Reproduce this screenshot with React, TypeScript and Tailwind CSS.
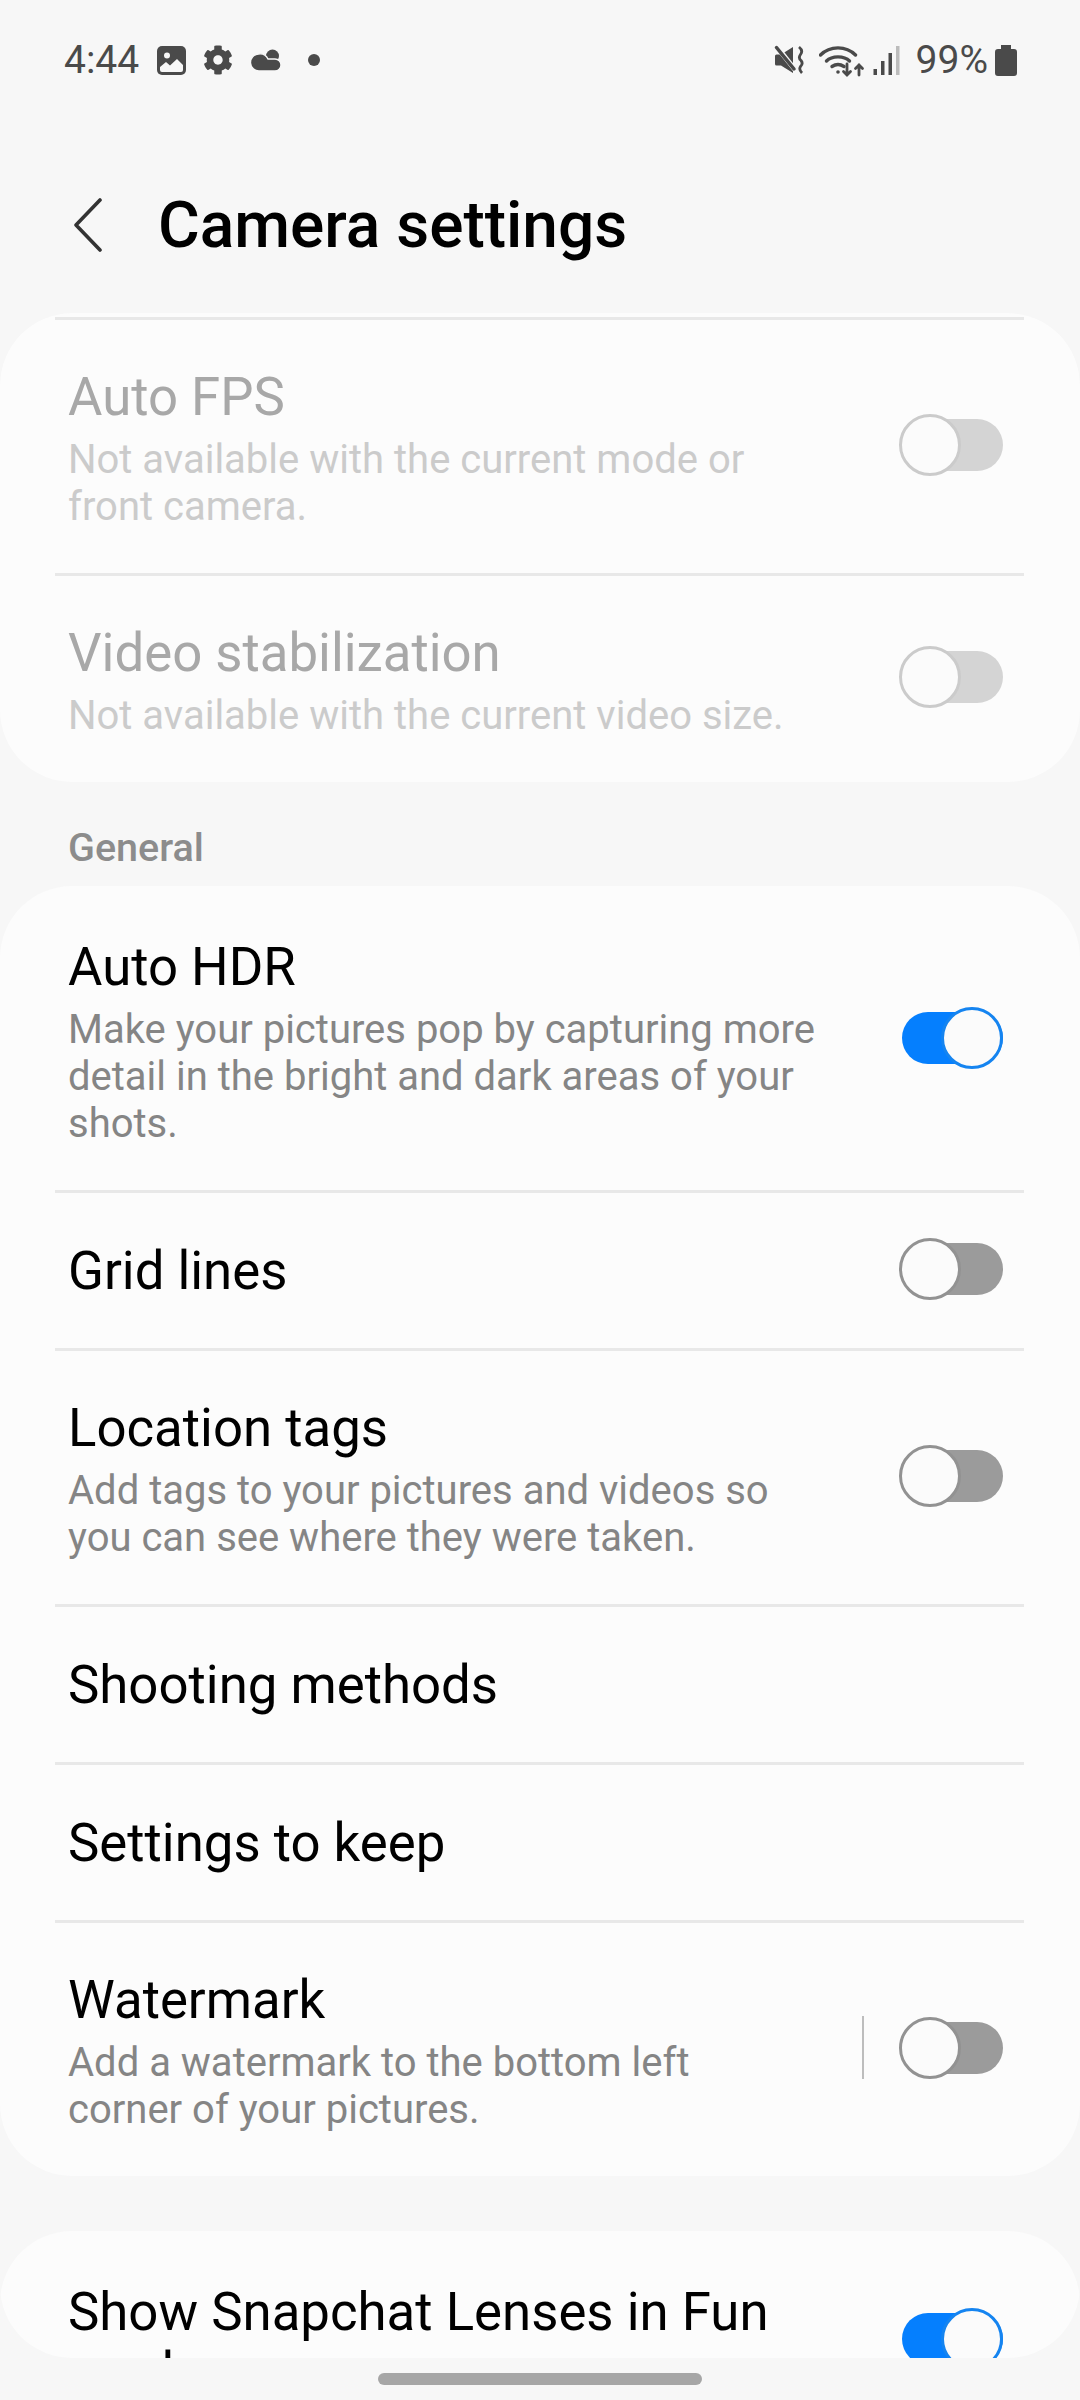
import React from 'react'
import { FaCog } from 'react-icons/fa'

const Toggle = ({ on = false, disabled = false }: { on?: boolean; disabled?: boolean }) => {
  const track = on ? 'bg-[#057ffe]' : disabled ? 'bg-[#d4d4d4]' : 'bg-[#9b9b9b]'
  const ring = on ? 'border-[#1584f0] right-0' : disabled ? 'border-[#cbcbcb] left-0' : 'border-[#929292] left-0'
  return (
    <div className="relative mb-[4px] h-[62px] w-[104px] shrink-0">
      <div className={`absolute top-[5px] right-0 left-[3px] h-[52px] rounded-full ${track}`} />
      <div className={`absolute top-0 size-[62px] rounded-full border-[3px] bg-[#fbfbfb] ${ring}`} />
    </div>
  )
}

type RowProps = {
  title: string
  sub?: string
  toggle?: 'on' | 'off' | 'disabled'
  noBorder?: boolean
  split?: boolean
}

const Row = ({ title, sub, toggle, noBorder, split }: RowProps) => {
  const disabled = toggle === 'disabled'
  return (
    <div className={`flex min-h-[158px] items-center pr-[21px] pl-[13px] ${noBorder ? '' : 'border-t-[3px] border-[#e8e8e8]'}`}>
      <div className={`min-w-0 flex-1 ${sub ? 'pt-[47px] pb-[43px]' : 'pt-[1px]'}`}>
        <div className={`text-[52.75px] leading-[60px] ${disabled ? 'text-[#a8a8a8]' : 'text-black'}`}>{title}</div>
        {sub && (
          <div className={`mt-[9px] text-[40px] leading-[47px] ${split ? 'max-w-[720px]' : 'max-w-[760px]'} ${disabled ? 'text-[#cbcbcb]' : 'text-[#858585]'}`}>
            {sub}
          </div>
        )}
      </div>
      {split && <div className="mr-[35px] mb-[4px] h-[63px] w-[2px] bg-[#bdbdbd]" />}
      {toggle && <Toggle on={toggle === 'on'} disabled={disabled} />}
    </div>
  )
}

const StatusBar = () => (
  <div className="flex h-[120px] items-center justify-between pr-[63px] pl-[64px] text-[#4a4a4a]">
    <div className="flex items-center">
      <span className="text-[39px] leading-none">4:44</span>
      <svg className="ml-[18px]" width="29" height="29" viewBox="0 0 29 29">
        <rect width="29" height="29" rx="5" fill="#4a4a4a" />
        <circle cx="10" cy="9.5" r="3" fill="#f7f7f7" />
        <path d="M3 21 L9 16 L13 19.5 L20 13 L26 19 V24 a2 2 0 0 1 -2 2 H5 a2 2 0 0 1 -2 -2 Z" fill="#f7f7f7" />
      </svg>
      <FaCog className="ml-[17px]" size={30} />
      <svg className="ml-[18px]" width="30" height="22" viewBox="0 0 30 22">
        <circle cx="21.5" cy="7" r="6.5" fill="#4a4a4a" />
        <path d="M8.5 22 a8.5 8.5 0 0 1 -1 -17 a9 9 0 0 1 9.5 5 H24 a6 6 0 0 1 0 12 Z" fill="#4a4a4a" stroke="#f7f7f7" strokeWidth="1.4" />
      </svg>
      <div className="ml-[27px] size-[12px] rounded-full bg-[#4a4a4a]" />
    </div>
    <div className="flex items-center">
      <svg width="30" height="30" viewBox="0 0 30 30" fill="#4a4a4a">
        <path d="M1 11 a1.5 1.5 0 0 1 1.5 -1.5 H7 L19 2 V28 L7 20.5 H2.5 A1.5 1.5 0 0 1 1 19 Z" />
        <path d="M1.5 0 L22 26" stroke="#f7f7f7" strokeWidth="5" />
        <path d="M2.5 2.5 L20 24" stroke="#4a4a4a" strokeWidth="3.5" strokeLinecap="round" />
        <path d="M25 2 Q29.5 5.5 26.5 9.5 Q24 13 27 15.5 Q29.5 18.5 26.5 21.5 Q24.5 24.5 28 28" fill="none" stroke="#4a4a4a" strokeWidth="2.8" />
      </svg>
      <svg className="ml-[15px]" width="46" height="34" viewBox="0 0 46 34" fill="none" stroke="#4a4a4a" strokeWidth="3.4" strokeLinecap="round">
        <path d="M1.5 12 C11 2.5 27 2.5 36.5 12" />
        <path d="M7.5 18 C13 12.5 25 12.5 30.5 18" />
        <path d="M13 23.5 Q19 19.5 25 23.5" />
        <circle cx="19" cy="29" r="1.8" fill="#4a4a4a" stroke="none" />
        <path d="M28 21 V32 M24.5 28.5 L28 32 L31.5 28.5" strokeWidth="2.8" />
        <path d="M40 32 V22 M36.5 25.5 L40 22 L43.5 25.5" strokeWidth="2.8" />
      </svg>
      <svg className="ml-[8px]" width="27" height="29" viewBox="0 0 27 29">
        <rect x="0.5" y="23" width="3.5" height="6" fill="#4a4a4a" />
        <rect x="8" y="15" width="3.5" height="14" fill="#4a4a4a" />
        <rect x="15.5" y="7" width="3.5" height="22" fill="#4a4a4a" />
        <rect x="23" y="0" width="3.5" height="29" fill="#bcbcbc" />
      </svg>
      <span className="ml-[16px] text-[39px] leading-none">99%</span>
      <svg className="ml-[7px]" width="22" height="31" viewBox="0 0 22 31" fill="#4a4a4a">
        <path d="M6 0 H16 V4 H19 a3 3 0 0 1 3 3 V28 a3 3 0 0 1 -3 3 H3 a3 3 0 0 1 -3 -3 V7 a3 3 0 0 1 3 -3 H6 Z" />
      </svg>
    </div>
  </div>
)

export default function App() {
  return (
    <div className="flex h-[2400px] w-[1080px] flex-col overflow-hidden bg-[#f7f7f7] font-['Roboto',sans-serif]">
      <StatusBar />

      <div className="flex h-[193px] items-center pt-[17px] pl-[74px]">
        <svg width="28" height="54" viewBox="0 0 28 54" fill="none" stroke="#333" strokeWidth="3.6" strokeLinecap="round" strokeLinejoin="round">
          <path d="M26 2 L2 27 L26 52" />
        </svg>
        <h1 className="mt-[2px] ml-[56px] text-[64px] leading-none font-medium text-black">Camera settings</h1>
      </div>

      <div className="h-[2045px] overflow-hidden rounded-[72px]">
        <div className="rounded-[72px] bg-[#fcfcfc] pt-[4px] pr-[56px] pl-[55px]">
          <Row title="Auto FPS" sub="Not available with the current mode or front camera." toggle="disabled" />
          <Row title="Video stabilization" sub="Not available with the current video size." toggle="disabled" />
        </div>

        <div className="pt-[46px] pb-[18px] pl-[68px] text-[39.5px] leading-[40px] font-medium text-[#8c8c8c]">General</div>

        <div className="rounded-[72px] bg-[#fcfcfc] pt-[4px] pr-[56px] pl-[55px]">
          <Row
            noBorder
            title="Auto HDR"
            sub="Make your pictures pop by capturing more detail in the bright and dark areas of your shots."
            toggle="on"
          />
          <Row title="Grid lines" toggle="off" />
          <Row title="Location tags" sub="Add tags to your pictures and videos so you can see where they were taken." toggle="off" />
          <Row title="Shooting methods" />
          <Row title="Settings to keep" />
          <Row split title="Watermark" sub="Add a watermark to the bottom left corner of your pictures." toggle="off" />
        </div>

        <div className="mt-[55px] rounded-[72px] bg-[#fcfcfc] pt-[4px] pr-[56px] pl-[55px]">
          <div className="flex items-center pr-[21px] pl-[13px]">
            <div className="w-[790px] pt-[47px] pb-[44px] text-[52.75px] leading-[60px] text-black">Show Snapchat Lenses in Fun modes</div>
            <div className="flex-1" />
            <Toggle on />
          </div>
        </div>
      </div>

      <div className="flex flex-1 items-center justify-center">
        <div className="h-[12px] w-[324px] rounded-[6px] bg-[#a6a6a6]" />
      </div>
    </div>
  )
}
